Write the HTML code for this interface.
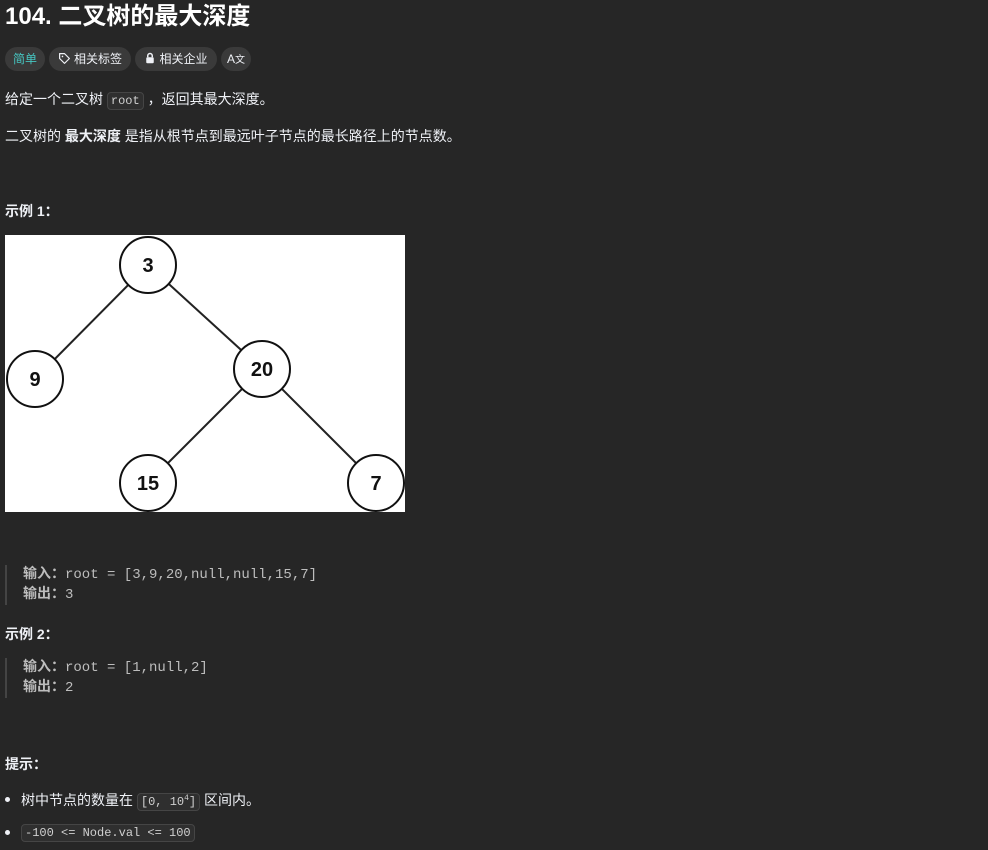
<!DOCTYPE html>
<html><head><meta charset="utf-8"><style>
body{margin:0;background:#262626;color:#eff1f6;font-family:"Liberation Sans","Noto Sans CJK SC",sans-serif;font-size:14px;width:988px;height:850px;overflow:hidden;position:relative}
.a{position:absolute;white-space:nowrap}
h1{position:absolute;left:5px;top:1px;margin:0;font-size:24px;font-weight:bold;line-height:32px;color:#fff}
.pill{position:absolute;top:47px;height:24px;border-radius:12px;background:#3a3a3a;font-size:12px;line-height:24px;color:#eff1f6;text-align:center}
code{font-family:"Liberation Mono",monospace;font-size:12px;background:#2f2f2f;border:1px solid #454545;border-radius:4px;padding:1px 3px;color:#d0d0d0}
.pre{position:absolute;left:5px;border-left:2px solid #444;padding-left:16px;font-family:"Liberation Mono","Noto Sans CJK SC",monospace;font-size:14px;line-height:20px;color:#bdbdbd}
.pre b{color:#bdbdbd}
.dot{position:absolute;left:5px;width:5px;height:5px;border-radius:50%;background:#eff1f6}
</style></head><body>
<h1>104. 二叉树的最大深度</h1>
<div class="pill" style="left:5px;width:40px;color:#46c6c2">简单</div>
<div class="pill" style="left:49px;width:82px"><svg width="13" height="13" viewBox="0 0 16 16" style="vertical-align:-2px;margin-right:3px"><path d="M2 2h6l6 6-6 6-6-6z" fill="none" stroke="#eff1f6" stroke-width="1.5" stroke-linejoin="round"/><circle cx="5.5" cy="5.5" r="1" fill="#eff1f6"/></svg>相关标签</div>
<div class="pill" style="left:135px;width:82px"><svg width="12" height="12" viewBox="0 0 16 16" style="vertical-align:-1px;margin-right:3px"><rect x="3" y="7" width="10" height="8" rx="1.5" fill="#eff1f6"/><path d="M5 7V5a3 3 0 0 1 6 0v2" fill="none" stroke="#eff1f6" stroke-width="2"/></svg>相关企业</div>
<div class="pill" style="left:221px;width:30px">A<span style="font-size:10px">文</span></div>
<div class="a" style="left:5px;top:89px">给定一个二叉树 <code>root</code> ，返回其最大深度。</div>
<div class="a" style="left:5px;top:126px">二叉树的 <b>最大深度</b> 是指从根节点到最远叶子节点的最长路径上的节点数。</div>
<div class="a" style="left:5px;top:201px;font-weight:bold">示例 1：</div>
<svg class="a" style="left:5px;top:235px" width="400" height="277" viewBox="0 0 400 277">
<rect width="400" height="277" fill="#fff"/>
<g stroke="#222" stroke-width="2"><line x1="143" y1="30" x2="30" y2="144"/><line x1="143" y1="30" x2="257" y2="134"/><line x1="257" y1="134" x2="143" y2="248"/><line x1="257" y1="134" x2="371" y2="248"/></g>
<g fill="#fff" stroke="#111" stroke-width="2"><circle cx="143" cy="30" r="28"/><circle cx="30" cy="144" r="28"/><circle cx="257" cy="134" r="28"/><circle cx="143" cy="248" r="28"/><circle cx="371" cy="248" r="28"/></g>
<g font-family="Liberation Sans" font-weight="bold" font-size="20" text-anchor="middle" fill="#111"><text x="143" y="37">3</text><text x="30" y="151">9</text><text x="257" y="141">20</text><text x="143" y="255">15</text><text x="371" y="255">7</text></g>
</svg>
<div class="pre" style="top:565px"><b>输入：</b>root = [3,9,20,null,null,15,7]<br><b>输出：</b>3</div>
<div class="a" style="left:5px;top:624px;font-weight:bold">示例 2：</div>
<div class="pre" style="top:658px"><b>输入：</b>root = [1,null,2]<br><b>输出：</b>2</div>
<div class="a" style="left:5px;top:754px;font-weight:bold">提示：</div>
<div class="dot" style="top:797px"></div>
<div class="a" style="left:21px;top:790px">树中节点的数量在 <code>[0, 10<sup style="font-size:8px">4</sup>]</code> 区间内。</div>
<div class="dot" style="top:830px"></div>
<div class="a" style="left:21px;top:823px"><code>-100 &lt;= Node.val &lt;= 100</code></div>
</body></html>
